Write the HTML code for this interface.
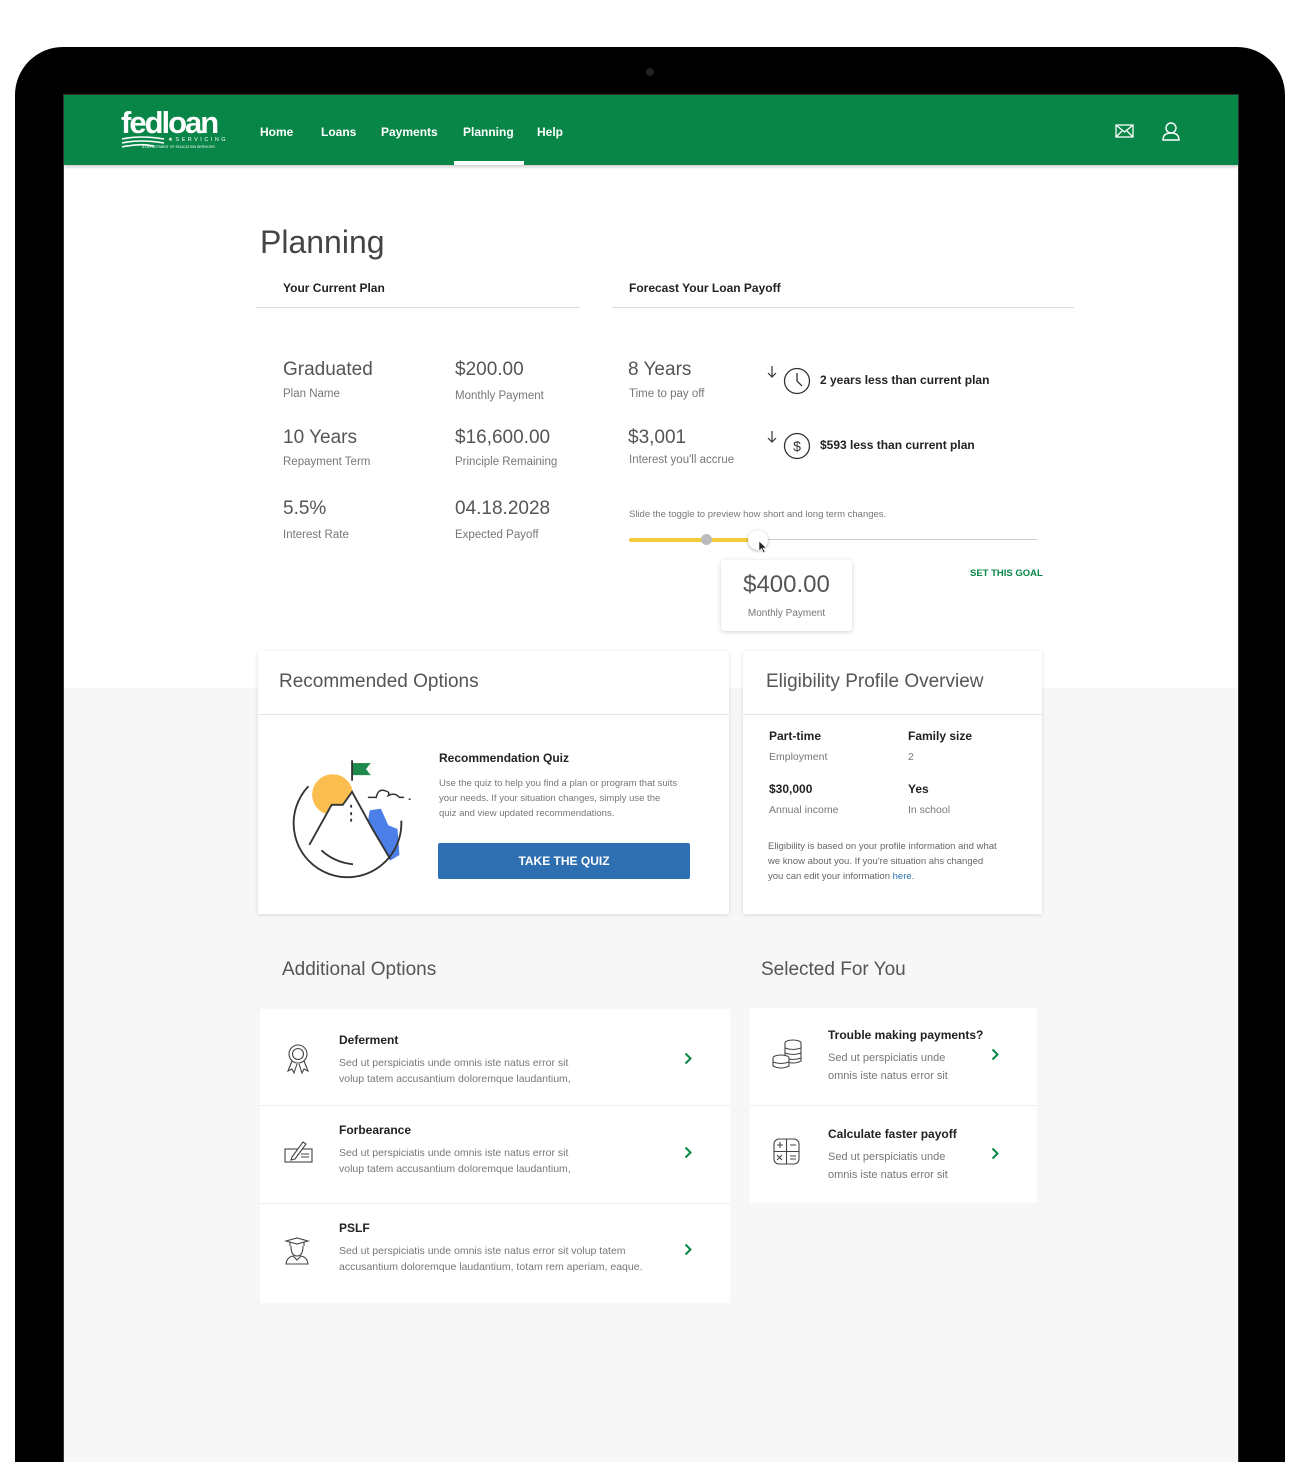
<!DOCTYPE html>
<html><head><meta charset="utf-8"><style>
*{margin:0;padding:0;box-sizing:border-box}
html{height:1462px;overflow:hidden}
body{width:1300px;height:1462px;background:#fff;font-family:"Liberation Sans",sans-serif;position:relative;overflow:hidden;color:#333}
.frame{position:absolute;left:15px;top:47px;width:1270px;height:1415px;background:#000;border-radius:48px 48px 0 0}
.cam{position:absolute;left:646px;top:68px;width:8px;height:8px;border-radius:50%;background:#222}
.screen{position:absolute;left:63px;top:94px;width:1176px;height:1368px;background:#f7f7f7;overflow:hidden;border:1px solid #333;border-bottom:none}
.white{position:absolute;left:0;top:0;width:100%;height:593px;background:#fff}
.hdr{position:absolute;left:0;top:0;width:100%;height:70px;background:#078647;box-shadow:0 2px 3px rgba(0,0,0,.2)}
.a{position:absolute;white-space:nowrap}
.nav{color:#fff;font-size:12px;font-weight:bold;top:30px}
.big{font-size:19px;color:#555}
.lab{font-size:11.5px;color:#777}
.card{position:absolute;background:#fff;box-shadow:0 1px 4px rgba(0,0,0,.12)}
.ttl{font-size:19px;color:#555}
.bold{font-weight:bold;color:#222}
.sm{font-size:10.5px;color:#777;line-height:15px}
.row{position:absolute;background:#fff;border-bottom:1px solid #eee}
.chev{position:absolute}
</style></head><body>
<div class="frame"></div><div class="cam"></div>
<div class="screen">
<div class="white"></div>
<div class="hdr">
 <div class="a" style="left:57px;top:10px;color:#fff;font-size:31px;font-weight:bold;letter-spacing:-2px">fedloan</div>
 <div class="a" style="left:104px;top:42px;color:#fff;font-size:5.5px;letter-spacing:2.5px">★SERVICING</div>
 <div class="a" style="left:78px;top:50px;color:#fff;font-size:3.5px">A DEPARTMENT OF EDUCATION SERVICER</div>
 <svg class="a" style="left:56px;top:40px" width="50" height="14"><path d="M2 4 Q20 0 44 4 M2 8 Q20 4 44 8 M2 12 Q20 8 34 11" stroke="#fff" stroke-width="1.6" fill="none"/></svg>
 <div class="a nav" style="left:196px">Home</div>
 <div class="a nav" style="left:257px">Loans</div>
 <div class="a nav" style="left:317px">Payments</div>
 <div class="a nav" style="left:399px">Planning</div>
 <div class="a nav" style="left:473px">Help</div>
 <div class="a" style="left:390px;top:66px;width:70px;height:4px;background:#fff"></div>
 <svg class="a" style="left:1051px;top:29px" width="20" height="14"><rect x="1" y="1" width="17" height="12" fill="none" stroke="#fff" stroke-width="1.3"/><path d="M1 1 L9.5 8 L18 1 M1 13 L7 7 M18 13 L12 7" stroke="#fff" stroke-width="1.3" fill="none"/></svg>
 <svg class="a" style="left:1097px;top:26px" width="20" height="20"><circle cx="10" cy="7" r="5" fill="none" stroke="#fff" stroke-width="1.4"/><path d="M2 19 Q2 12 10 12 Q18 12 18 19 Z" fill="none" stroke="#fff" stroke-width="1.4"/></svg>
</div>

<div class="a" style="left:196px;top:129px;font-size:32px;color:#444">Planning</div>
<div class="a bold" style="left:219px;top:186px;font-size:12px">Your Current Plan</div>
<div class="a" style="left:192px;top:212px;width:324px;height:1px;background:#ddd"></div>
<div class="a bold" style="left:565px;top:186px;font-size:12px">Forecast Your Loan Payoff</div>
<div class="a" style="left:548px;top:212px;width:462px;height:1px;background:#ddd"></div>

<div class="a big" style="left:219px;top:264px">Graduated</div><div class="a lab" style="left:219px;top:293px">Plan Name</div>
<div class="a big" style="left:391px;top:264px">$200.00</div><div class="a lab" style="left:391px;top:295px">Monthly Payment</div>
<div class="a big" style="left:219px;top:332px">10 Years</div><div class="a lab" style="left:219px;top:361px">Repayment Term</div>
<div class="a big" style="left:391px;top:332px">$16,600.00</div><div class="a lab" style="left:391px;top:361px">Principle Remaining</div>
<div class="a big" style="left:219px;top:403px">5.5%</div><div class="a lab" style="left:219px;top:434px">Interest Rate</div>
<div class="a big" style="left:391px;top:403px">04.18.2028</div><div class="a lab" style="left:391px;top:434px">Expected Payoff</div>

<div class="a big" style="left:564px;top:264px">8 Years</div><div class="a lab" style="left:565px;top:293px">Time to pay off</div>
<div class="a big" style="left:564px;top:332px">$3,001</div><div class="a lab" style="left:565px;top:359px">Interest you'll accrue</div>
<svg class="a" style="left:703px;top:270px" width="10" height="14"><path d="M5 1 V12 M1 8 L5 12 L9 8" fill="none" stroke="#333" stroke-width="1.2"/></svg>
<svg class="a" style="left:703px;top:335px" width="10" height="14"><path d="M5 1 V12 M1 8 L5 12 L9 8" fill="none" stroke="#333" stroke-width="1.2"/></svg>
<svg class="a" style="left:719px;top:272px" width="28" height="28"><circle cx="14" cy="14" r="12.5" fill="none" stroke="#333" stroke-width="1.3"/><path d="M14 6 V14 L19 19" fill="none" stroke="#333" stroke-width="1.3"/></svg>
<svg class="a" style="left:719px;top:337px" width="28" height="28"><circle cx="14" cy="14" r="12.5" fill="none" stroke="#333" stroke-width="1.3"/><text x="14" y="19" text-anchor="middle" font-size="14" font-family="Liberation Sans" fill="#333">$</text></svg>
<div class="a bold" style="left:756px;top:278px;font-size:12px">2 years less than current plan</div>
<div class="a bold" style="left:756px;top:343px;font-size:12px">$593 less than current plan</div>
<div class="a" style="left:565px;top:414px;font-size:9.5px;color:#777">Slide the toggle to preview how short and long term changes.</div>
<div class="a" style="left:565px;top:444px;width:408px;height:1px;background:#ccc"></div>
<div class="a" style="left:565px;top:443px;width:130px;height:4px;border-radius:2px;background:#f2cb3b"></div>
<div class="a" style="left:637px;top:439px;width:11px;height:11px;border-radius:50%;background:#bbb"></div>
<div class="a" style="left:684px;top:435px;width:20px;height:20px;border-radius:50%;background:#fff;box-shadow:0 1px 3px rgba(0,0,0,.3)"></div>
<svg class="a" style="left:694px;top:445px" width="10" height="14"><path d="M1 1 L1 11 L3.5 8.5 L5.5 13 L7 12 L5 8 L8.5 8 Z" fill="#222" stroke="#fff" stroke-width=".6"/></svg>
<div class="card" style="left:657px;top:465px;width:131px;height:71px;border-radius:3px;box-shadow:0 1px 5px rgba(0,0,0,.18)">
 <div class="a" style="left:0;width:131px;text-align:center;top:11px;font-size:24px;color:#555">$400.00</div>
 <div class="a" style="left:0;width:131px;text-align:center;top:48px;font-size:10px;color:#777">Monthly Payment</div>
</div>
<div class="a" style="left:906px;top:473px;font-size:9.5px;font-weight:bold;color:#078647">SET THIS GOAL</div>

<div class="card" style="left:194px;top:556px;width:471px;height:263px">
 <div class="a ttl" style="left:21px;top:20px">Recommended Options</div>
 <div class="a" style="left:0;top:63px;width:100%;height:1px;background:#e5e5e5"></div>
 <svg class="a" style="left:30px;top:100px" width="130" height="130" viewBox="0 0 140 140">
  <circle cx="48" cy="47" r="22" fill="#fbbd4d"/>
  <path d="M22 95 L47 58 L59 58 L69 44 L91 84 L108 112 L60 125 Z" fill="#fff"/>
  <path d="M88 64 L100 62 L108 80 L118 84 L120 112 L110 118 L86 76 Z" fill="#4d7fe8"/>
  <rect x="69" y="13" width="20" height="13" fill="#1e8a4c"/>
  <path d="M89 13 L84 19.5 L89 26 Z" fill="#fff"/>
  <path d="M69 10 V32" stroke="#333" stroke-width="2"/>
  <path d="M23 101 L47 58 L59 58 L69 44 L91 84 L110 116" fill="none" stroke="#333" stroke-width="2"/>
  <path d="M22 38 A58 58 0 1 0 122 75" fill="none" stroke="#333" stroke-width="2"/>
  <path d="M36 107 Q50 120 70 122" fill="none" stroke="#333" stroke-width="2"/>
  <path d="M86 50 H95 Q97 40 105 43 Q110 44 108 48 Q115 44 120 50 H125 M130 52 h2" fill="none" stroke="#333" stroke-width="1.6"/>
  <path d="M68 58 v3 M68 66 v3 M68 73 v3" stroke="#333" stroke-width="2"/>
 </svg>
 <div class="a bold" style="left:181px;top:100px;font-size:12px">Recommendation Quiz</div>
 <div class="a sm" style="left:181px;top:125px;white-space:normal;width:240px;font-size:9.5px">Use the quiz to help you find a plan or program that suits your needs. If your situation changes, simply use the quiz and view updated recommendations.</div>
 <div class="a" style="left:180px;top:192px;width:252px;height:36px;background:#2e6fb2;border-radius:2px;color:#fff;font-size:12px;font-weight:bold;text-align:center;line-height:36px">TAKE THE QUIZ</div>
</div>

<div class="card" style="left:679px;top:556px;width:299px;height:263px">
 <div class="a ttl" style="left:23px;top:20px">Eligibility Profile Overview</div>
 <div class="a" style="left:0;top:63px;width:100%;height:1px;background:#e5e5e5"></div>
 <div class="a bold" style="left:26px;top:78px;font-size:12px">Part-time</div><div class="a sm" style="left:26px;top:99px">Employment</div>
 <div class="a bold" style="left:165px;top:78px;font-size:12px">Family size</div><div class="a sm" style="left:165px;top:99px">2</div>
 <div class="a bold" style="left:26px;top:131px;font-size:12px">$30,000</div><div class="a sm" style="left:26px;top:152px">Annual income</div>
 <div class="a bold" style="left:165px;top:131px;font-size:12px">Yes</div><div class="a sm" style="left:165px;top:152px">In school</div>
 <div class="a sm" style="left:25px;top:188px;white-space:normal;width:230px;font-size:9.5px;color:#666">Eligibility is based on your profile information and what we know about you. If you're situation ahs changed you can edit your information <span style="color:#2e6fb2">here.</span></div>
</div>

<div class="a ttl" style="left:218px;top:864px">Additional Options</div>
<div class="a ttl" style="left:697px;top:864px">Selected For You</div>

<div class="row" style="left:196px;top:914px;width:470px;height:97px">
 <svg class="a" style="left:25px;top:34px" width="26" height="32"><circle cx="13" cy="11" r="9" fill="none" stroke="#444" stroke-width="1.1"/><circle cx="13" cy="11" r="5.5" fill="none" stroke="#444" stroke-width="1.1"/><path d="M7 18 L3 28 L7 26 L9 30 L12 21 M19 18 L23 28 L19 26 L17 30 L14 21" fill="none" stroke="#444" stroke-width="1.1"/></svg>
 <div class="a bold" style="left:79px;top:24px;font-size:12px">Deferment</div>
 <div class="a sm" style="left:79px;top:46px;font-size:10.5px;line-height:16px">Sed ut perspiciatis unde omnis iste natus error sit<br>volup tatem accusantium doloremque laudantium,</div>
 <svg class="chev" style="left:424px;top:43px" width="8" height="13"><path d="M1.5 1.5 L6.5 6.5 L1.5 11.5" fill="none" stroke="#078647" stroke-width="2"/></svg>
</div>
<div class="row" style="left:196px;top:1011px;width:470px;height:98px">
 <svg class="a" style="left:24px;top:34px" width="30" height="24"><rect x="1" y="9" width="27" height="13" fill="none" stroke="#444" stroke-width="1.1"/><path d="M8 17 L19 2 L22 4 L11 19 L7 20 Z M17 14 H25 M17 17 H25" fill="#fff" stroke="#444" stroke-width="1.1"/></svg>
 <div class="a bold" style="left:79px;top:17px;font-size:12px">Forbearance</div>
 <div class="a sm" style="left:79px;top:39px;font-size:10.5px;line-height:16px">Sed ut perspiciatis unde omnis iste natus error sit<br>volup tatem accusantium doloremque laudantium,</div>
 <svg class="chev" style="left:424px;top:40px" width="8" height="13"><path d="M1.5 1.5 L6.5 6.5 L1.5 11.5" fill="none" stroke="#078647" stroke-width="2"/></svg>
</div>
<div class="row" style="left:196px;top:1109px;width:470px;height:99px;border:none">
 <svg class="a" style="left:24px;top:33px" width="26" height="28"><path d="M2 4 L13 1 L24 4 L13 7 Z M6 5 V9 M20 5 V9" fill="none" stroke="#444" stroke-width="1.1"/><path d="M7 9 Q7 19 13 19 Q19 19 19 9 M2 27 Q3 20 9 19 L13 23 L17 19 Q23 20 24 27 Z" fill="none" stroke="#444" stroke-width="1.1"/></svg>
 <div class="a bold" style="left:79px;top:17px;font-size:12px">PSLF</div>
 <div class="a sm" style="left:79px;top:39px;font-size:10.5px;line-height:16px">Sed ut perspiciatis unde omnis iste natus error sit volup tatem<br>accusantium doloremque laudantium, totam rem aperiam, eaque.</div>
 <svg class="chev" style="left:424px;top:39px" width="8" height="13"><path d="M1.5 1.5 L6.5 6.5 L1.5 11.5" fill="none" stroke="#078647" stroke-width="2"/></svg>
</div>

<div class="row" style="left:686px;top:913px;width:287px;height:98px">
 <svg class="a" style="left:21px;top:30px" width="34" height="34"><g fill="#fff" stroke="#444" stroke-width="1.1"><ellipse cx="22" cy="5" rx="8" ry="3"/><path d="M14 5 V23 Q22 27 30 23 V5"/><path d="M14 10 Q22 13 30 10 M14 15 Q22 18 30 15 M14 20 Q22 23 30 20"/><ellipse cx="10" cy="20" rx="8" ry="3"/><path d="M2 20 V28 Q10 32 18 28 V20"/><path d="M2 24 Q10 27 18 24"/></g></svg>
 <div class="a bold" style="left:78px;top:20px;font-size:12px">Trouble making payments?</div>
 <div class="a sm" style="left:78px;top:41px;font-size:11px;line-height:18px">Sed ut perspiciatis unde<br>omnis iste natus error sit</div>
 <svg class="chev" style="left:241px;top:40px" width="8" height="13"><path d="M1.5 1.5 L6.5 6.5 L1.5 11.5" fill="none" stroke="#078647" stroke-width="2"/></svg>
</div>
<div class="row" style="left:686px;top:1011px;width:287px;height:97px;border:none">
 <svg class="a" style="left:23px;top:32px" width="28" height="28"><rect x="1" y="1" width="25" height="25" rx="5" fill="none" stroke="#444" stroke-width="1.1"/><path d="M13.5 1 V26 M1 13.5 H26 M4 7 H10 M7 4 V10 M17 7 H23 M4 17 L9 22 M9 17 L4 22 M17 18 H23 M17 21 H23" stroke="#444" stroke-width="1.1"/></svg>
 <div class="a bold" style="left:78px;top:21px;font-size:12px">Calculate faster payoff</div>
 <div class="a sm" style="left:78px;top:42px;font-size:11px;line-height:18px">Sed ut perspiciatis unde<br>omnis iste natus error sit</div>
 <svg class="chev" style="left:241px;top:41px" width="8" height="13"><path d="M1.5 1.5 L6.5 6.5 L1.5 11.5" fill="none" stroke="#078647" stroke-width="2"/></svg>
</div>
</div>
</body></html>
